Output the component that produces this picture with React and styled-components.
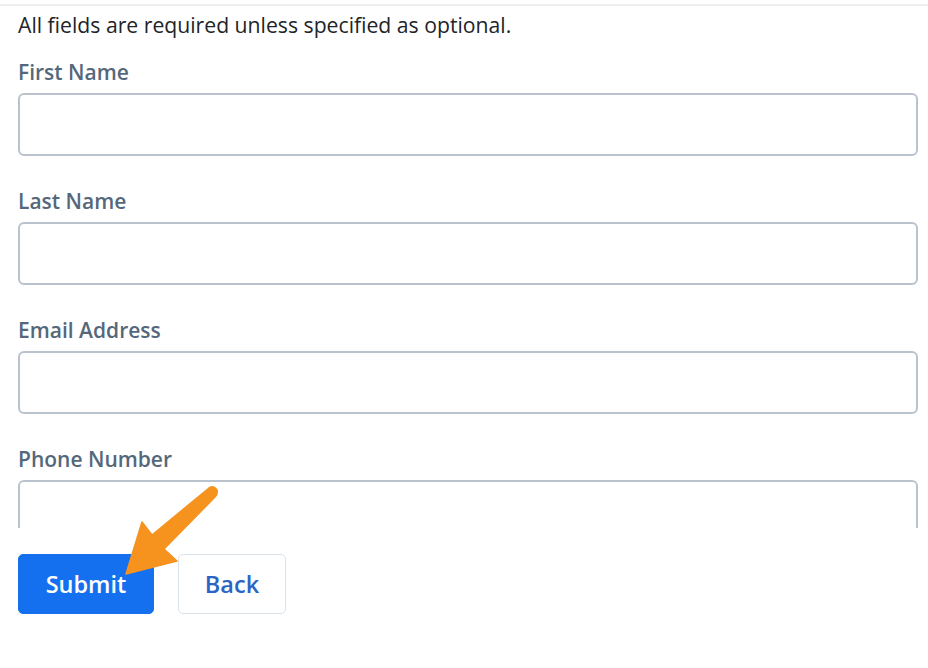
import React from 'react';
import styled, { createGlobalStyle } from 'styled-components';

const GlobalStyle = createGlobalStyle`
  * { box-sizing: border-box; }
  body {
    margin: 0;
    background: #ffffff;
    font-family: 'Open Sans', 'Noto Sans', sans-serif;
  }
`;

const Page = styled.div`
  position: relative;
  width: 928px;
  height: 668px;
  padding-top: 4px;
  overflow: hidden;
`;

const ScrollArea = styled.div`
  height: 524px;
  overflow: hidden;
  border-top: 2px solid #eeeeee;
  padding: 0 10px 0 18px;
`;

const Intro = styled.p`
  margin: 5px 0 0;
  font-size: 21.2px;
  line-height: 28px;
  color: #222428;
`;

const Field = styled.div`
  display: flex;
  flex-direction: column;
  margin-top: ${(p) => (p.first ? '19px' : '31px')};
`;

const Label = styled.label`
  font-size: 21px;
  font-weight: 600;
  line-height: 28px;
  color: #55687b;
  margin-bottom: 7px;
`;

const Input = styled.input`
  height: 63px;
  width: 100%;
  border: 2px solid #b9c2cd;
  border-radius: 6px;
  background: #fff;
  font: inherit;
  padding: 0 14px;
  outline: none;
`;

const Actions = styled.div`
  display: flex;
  gap: 24px;
  padding: 26px 18px 0;
`;

const Button = styled.button`
  height: 60px;
  padding: 0;
  border-radius: 5px;
  font-family: 'Open Sans', 'Noto Sans', sans-serif;
  font-size: 23.5px;
  font-weight: 600;
  cursor: pointer;
  border: 1px solid ${(p) => (p.primary ? '#1570ef' : '#dde3ea')};
  background: ${(p) => (p.primary ? '#1570ef' : '#ffffff')};
  color: ${(p) => (p.primary ? '#ffffff' : '#2c64c6')};
  width: ${(p) => p.w}px;
`;

const Pointer = styled.svg`
  position: absolute;
  left: 0;
  top: 0;
  pointer-events: none;
`;

const fields = ['First Name', 'Last Name', 'Email Address', 'Phone Number'];

export default function App() {
  return (
    <Page>
      <GlobalStyle />
      <ScrollArea>
        <Intro>All fields are required unless specified as optional.</Intro>
        {fields.map((f, i) => (
          <Field key={f} first={i === 0}>
            <Label>{f}</Label>
            <Input type="text" aria-label={f} />
          </Field>
        ))}
      </ScrollArea>
      <Actions>
        <Button primary w={136}>Submit</Button>
        <Button w={108}>Back</Button>
      </Actions>
      <Pointer width="928" height="668" viewBox="0 0 928 668">
        <path
          d="M126 574 L142 522 L152 535 L209 488 Q214 485 217 490 Q218 494 215 497 L164 549 L177 561 Z"
          fill="#f6921e"
          stroke="#f6921e"
          strokeWidth="1.5"
          strokeLinejoin="round"
        />
      </Pointer>
    </Page>
  );
}
